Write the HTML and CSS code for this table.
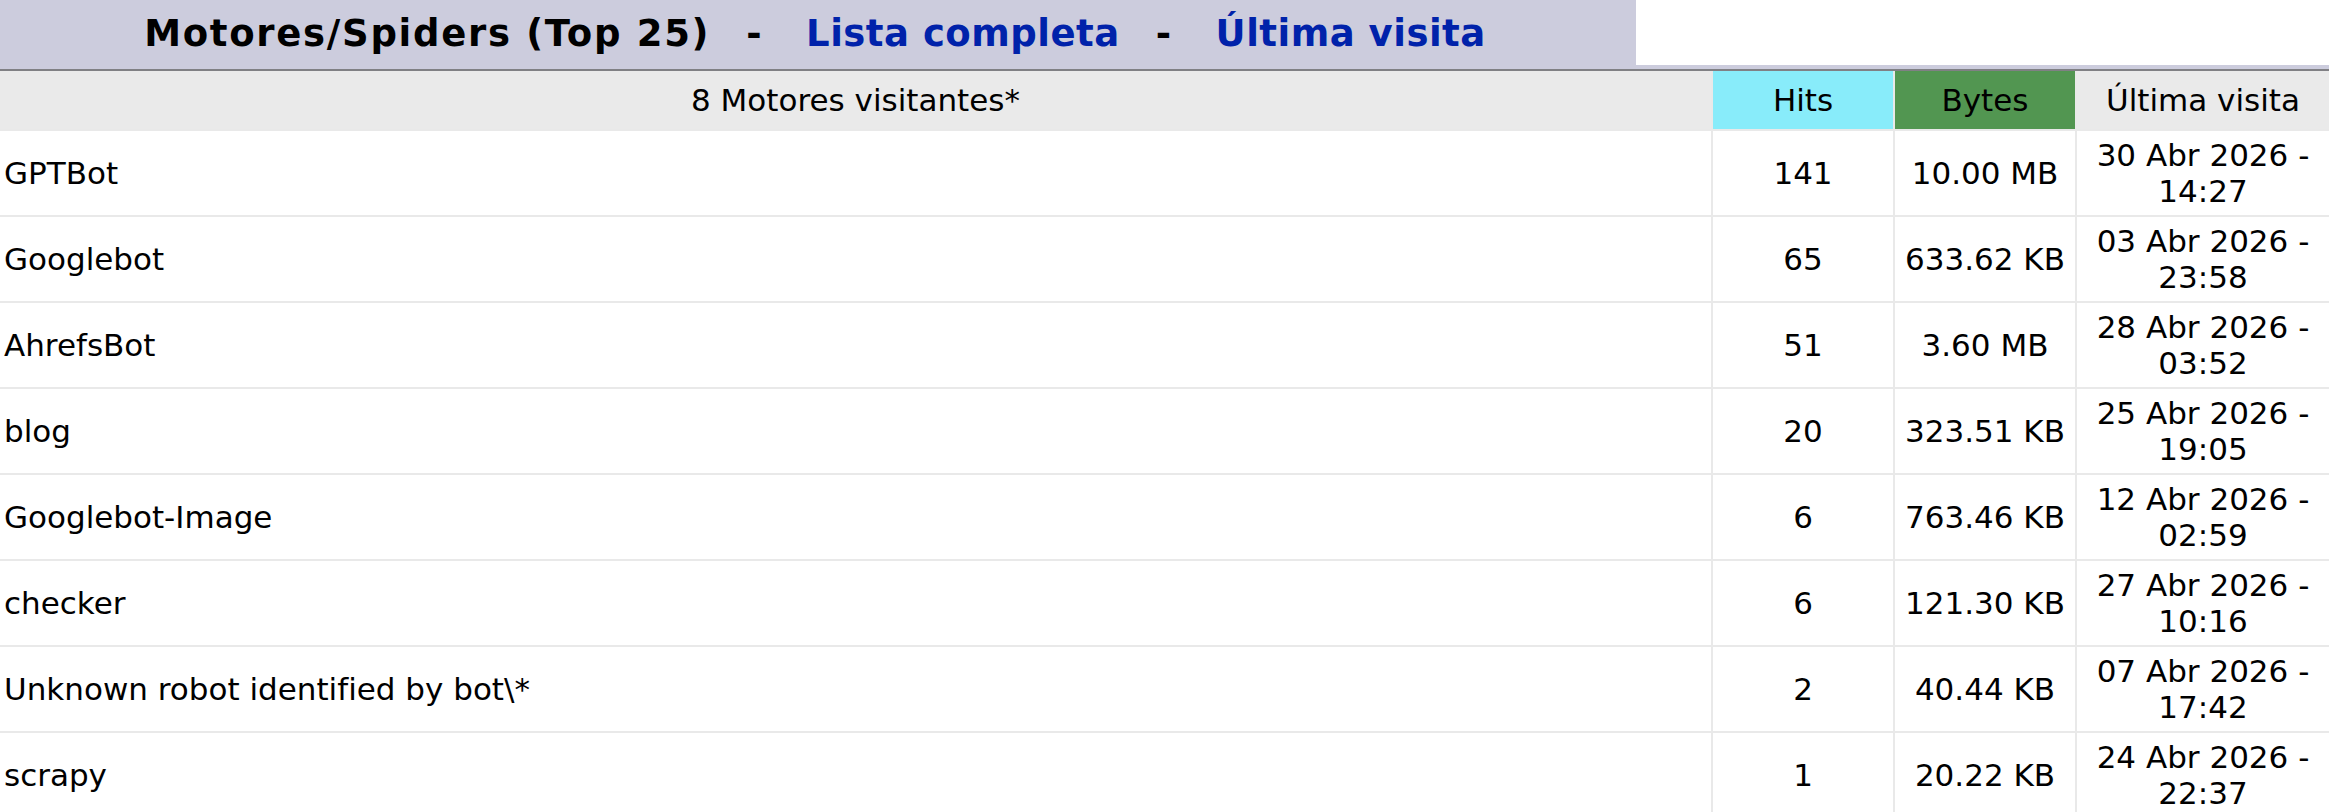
FILE: index.html
```html
<!DOCTYPE html>
<html lang="es">
<head>
<meta charset="utf-8">
<title>Motores/Spiders (Top 25)</title>
<link rel="stylesheet" href="styles.css">
</head>
<body>
<div class="panel">
  <div class="titlerow">
    <div class="title">
      <span class="main">Motores/Spiders (Top 25)</span>
      <span class="sep">-</span>
      <a href="#" class="link">Lista completa</a>
      <span class="sep">-</span>
      <a href="#" class="link">Última visita</a>
    </div>
    <div class="blank"></div>
  </div>
</div>
<table class="data">
  <colgroup>
    <col class="c-name">
    <col class="c-num">
    <col class="c-num">
    <col class="c-date">
  </colgroup>
  <thead>
    <tr>
      <th>8 Motores visitantes*</th>
      <th class="th-hits">Hits</th>
      <th class="th-bytes">Bytes</th>
      <th class="last">Última visita</th>
    </tr>
  </thead>
  <tbody>
    <tr><td class="name">GPTBot</td><td>141</td><td>10.00 MB</td><td class="last">30 Abr 2026 - 14:27</td></tr>
    <tr><td class="name">Googlebot</td><td>65</td><td>633.62 KB</td><td class="last">03 Abr 2026 - 23:58</td></tr>
    <tr><td class="name">AhrefsBot</td><td>51</td><td>3.60 MB</td><td class="last">28 Abr 2026 - 03:52</td></tr>
    <tr><td class="name">blog</td><td>20</td><td>323.51 KB</td><td class="last">25 Abr 2026 - 19:05</td></tr>
    <tr><td class="name">Googlebot-Image</td><td>6</td><td>763.46 KB</td><td class="last">12 Abr 2026 - 02:59</td></tr>
    <tr><td class="name">checker</td><td>6</td><td>121.30 KB</td><td class="last">27 Abr 2026 - 10:16</td></tr>
    <tr><td class="name">Unknown robot identified by bot\*</td><td>2</td><td>40.44 KB</td><td class="last">07 Abr 2026 - 17:42</td></tr>
    <tr><td class="name">scrapy</td><td>1</td><td>20.22 KB</td><td class="last">24 Abr 2026 - 22:37</td></tr>
  </tbody>
</table>
</body>
</html>
```
FILE: styles.css
```css
html, body {
  margin: 0;
  padding: 0;
  background: #ffffff;
}

body {
  font-family: "DejaVu Sans", Verdana, sans-serif;
  color: #000000;
}

.panel {
  background: #ccccdd;
  padding-bottom: 4px;
}

.titlerow {
  display: flex;
  height: 65px;
}

.title {
  width: 1636px;
  display: flex;
  align-items: center;
  justify-content: center;
  font-weight: bold;
  font-size: 37px;
  letter-spacing: 0.5px;
  white-space: nowrap;
  padding-right: 6px;
  padding-top: 2px;
  box-sizing: border-box;
}

.title .main {
  letter-spacing: 1.7px;
}

.sep {
  margin: 0 44px 0 36px;
}

.link {
  color: #0022aa;
  text-decoration: none;
}

.blank {
  flex: 1;
  background: #ffffff;
}

.data {
  width: 100%;
  border-collapse: separate;
  border-spacing: 0;
  table-layout: fixed;
  border-top: 2px solid #808084;
  font-size: 31px;
}

.c-num {
  width: 182px;
}

.c-date {
  width: 252px;
}

.data th,
.data td {
  border-right: 2px solid #e9e9e9;
  border-bottom: 2px solid #e9e9e9;
  text-align: center;
  vertical-align: middle;
  padding: 0 3px;
  font-weight: normal;
}

.data th {
  background: #eaeaea;
  height: 58px;
}

.data td {
  height: 84px;
  background: #ffffff;
}

.data .last {
  border-right: none;
}

.data .th-hits {
  background: #88ecfa;
}

.data .th-bytes {
  background: #529651;
}

.data td.name {
  text-align: left;
  padding-left: 4px;
}
```
